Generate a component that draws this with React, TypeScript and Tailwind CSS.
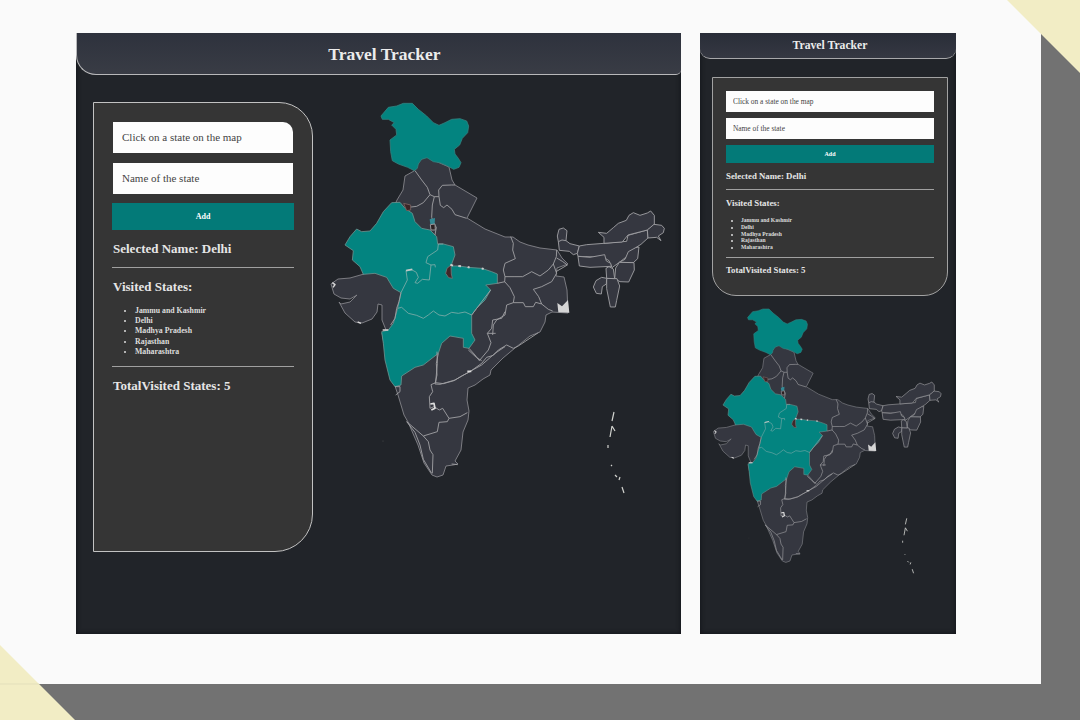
import React from "react";

const visited = ["Jammu and Kashmir", "Delhi", "Madhya Pradesh", "Rajasthan", "Maharashtra"];

function IndiaMap({ className }: { className: string }) {
  return (
    <svg
      viewBox="326 96 344 404"
      preserveAspectRatio="none"
      className={className}
      fill="none"
      stroke="#a2a2a5"
      strokeWidth="0.9"
      strokeLinejoin="round"
      role="img"
    >
      {/* mainland */}
      <path
        fill="#353740"
        stroke="#84858a"
        d="M414 171L405 176 403 190 397 200 364 274 350 278 338 279 331 284 334 294 341 298 350 299 357 295 350 302 341 304 339 302 345 313 355 322 362 323 372 319 377 312 378 304 382 305 382 320 386 330 382 333 388 365 395 386 398 395 404 415 408 422 418 445 424 463 432 475 437 477 443 475 446 466 453 465 458 464 455 461 461 450 463 432 468 420 469 411 467 400 468 388 475 385 483 379 490 375 491 370 503 358 515 348 530 336 540 332 545 322 546 315 552 312 568 313 567 290 564 277 556 276 557 268 568 264 562 258 557 250 540 248 528 245 520 242 513 237 505 237 485 229 467 218 477 198 455 185 452 180 449 167 433 160 427 156 420 160Z"
      />
      {/* north east, in a frame offset to (490, 200) at three units per point */}
      <g transform="translate(490 200) scale(.33333)" strokeWidth="2.7" fill="#353740">
        <path d="M205 125L202 108 207 88 220 84 231 92 228 122 240 131 268 138 262 160 250 164 238 154 208 151Z" />
        <path d="M205 125L216 120 228 122" fill="none" />
        <path d="M268 138L290 134 342 130 410 124 414 106 472 90 474 114 453 133 437 143 410 170 388 187 366 203 357 182 340 172 264 169 262 160Z" />
        <path d="M342 130L342 112 325 97 350 100 370 83 385 70 409 61 417 46 430 38 450 46 472 39 482 33 493 46 493 75 472 90 414 105 397 126Z" />
        <path d="M472 90L492 73 515 76 523 85 520 98 505 108 513 122 500 112 474 114Z" />
        <path d="M264 169L300 172 344 164 349 183 362 190 364 199 300 202 268 198Z" />
        <path d="M437 143L447 141 443 176 430 188 388 187 405 178 415 155Z" />
        <path d="M388 187L432 188 433 210 416 246 390 245 374 236 377 204Z" />
        <path d="M350 235L381 236 389 258 380 301 376 321 361 321 350 266Z" />
        <path d="M348 205L357 200 370 207 374 236 350 235Z" />
        <path d="M350 235L335 232 318 242 310 261 319 280 334 282 337 260 349 252Z" />
      </g>
      {/* visited regions */}
      <g fill="#038480" strokeWidth="2.4" stroke="#6f9491">
        <path
          transform="translate(325 90) scale(.33333)"
          stroke="#35827f"
          d="M168 78L190 52 215 48 235 40 262 40 280 58 305 78 325 98 342 106 360 98 380 88 405 86 425 93 431 108 428 128 412 145 404 165 388 178 390 192 400 205 408 218 402 232 386 238 368 228 345 218 325 215 306 203 290 208 280 222 277 235 268 242 248 232 220 222 202 212 197 185 195 150 215 135 213 118 200 105 208 98 190 88 172 88Z"
        />
        <g transform="translate(325 230) scale(.33333)">
          <path d="M60 45L75 20 95-3 110 5 135 3 155-20 175-55 200-82 225-83 240-65 262-50 270-25 290-5 315 0 335 20 338 42 355 42 385 50 390 75 378 108 400 108 430 112 470 115 500 125 517 132 517 160 482 165 497 180 480 210 455 235 440 255 440 310 450 330 432 355 415 352 415 325 375 318 350 340 340 370 295 405 270 412 230 438 228 465 210 470 195 450 180 390 175 340 170 305 190 300 205 280 218 235 228 188 205 175 185 142 150 130 115 133 105 110 82 90 85 62Z" />
          <g fill="none" stroke="#85aeab">
            <path d="M228 188L247 150 243 122 258 118 274 127 280 142 270 158 278 160 292 148 313 150 318 105 303 98 308 80 338 60 340 42 355 42M318 105L330 104 331 112" />
            <path d="M218 235L230 232 250 250 275 256 295 265 310 255 325 243 342 255 360 258 380 247 400 250 420 246 440 255" />
          </g>
          <path d="M378 105L366 115 362 130 371 143 382 145 379 132Z" fill="#40272a" stroke="#777" />
          <path d="M243 122L262 118" fill="none" stroke="#bcc8c5" strokeWidth="5" />
          <path d="M376 104L384 107M400 108L408 109M428 111L434 113M470 115L476 117" stroke="#ccc" strokeWidth="6" />
        </g>
      </g>
      {/* northern borders */}
      <g transform="translate(325 90) scale(.33333)" strokeWidth="2.7">
        <path d="M270 242L290 270 307 292 315 314 295 338 275 349 250 352M315 314L328 320 322 345 320 382 326 400 334 412 330 435M328 320L342 320 341 300 352 286 380 285 390 285M342 320L346 346 356 353 366 345 381 358 390 374 425 385" />
        <path d="M236 340L257 345 257 360 245 362Z" fill="#3a2426" stroke="#76605f" />
        <path d="M314 388L330 384 329 402 316 402Z" fill="#328995" stroke="none" />
        <path d="M316 404L330 402 331 420 318 420Z" fill="#2c2022" />
      </g>
      {/* central borders */}
      <g transform="translate(325 230) scale(.33333)" strokeWidth="2.7">
        <path d="M228 188L222 215 215 235 210 265 197 285M440 255L455 235 497 180M432 355L450 375 463 392 490 360 498 338 487 310 512 310M487 310L500 295 503 270 530 265 540 245M340 370L334 400 336 435 330 462 345 463 390 450 425 430 470 405 510 370 540 350M517 160L540 155" />
        <path d="M22 158L30 164 24 172M98 276L108 280M173 300L190 300" stroke="#d6d6d6" strokeWidth="4.5" />
      </g>
      {/* southern borders */}
      <g transform="translate(380 330) scale(.33333)" strokeWidth="2.7">
        <path d="M171 65L172 100 167 158 190 161 222 152 245 138 270 125 305 100 320 82 340 76 355 60 380 45 400 55 415 48 475 8M167 158L153 164 158 185 148 200 150 235 162 230 178 240 188 235 207 265 240 260 262 248M207 265L202 275 177 277 172 305 130 318 80 275M130 318L145 335 150 360 159 374 157 430M80 275L105 307 120 345 130 388 155 430M45 170L60 170 60 185 47 195M265 60L290 83 305 92M215 402L233 404" />
        <path d="M151 222L162 220 165 235 154 240M262 124L274 124" stroke="#ddd" strokeWidth="5" />
      </g>
      {/* eastern borders */}
      <g transform="translate(490 200) scale(.33333)" strokeWidth="2.7">
        <path d="M62 110L70 130 68 150 76 176 45 190 40 210 45 230 75 230 98 230 125 215 150 228 175 210 190 192 199 170 200 150M45 230L44 245 60 263 73 290 70 308 100 308 106 320 130 320 137 307 155 312 175 328 188 333M155 312L146 290 130 268 155 260 185 245 200 220 190 192M70 308L50 315 45 345 20 360 10 375 8 405M200 174L217 184 232 195 198 215" />
        <path d="M202 309L216 319 234 300 238 338 205 337Z" fill="#d5d5d5" stroke="none" />
      </g>
      {/* islands */}
      <path stroke="#d2d3cf" strokeWidth="1.2" d="M614 412L612 421M612 426L610 437M612 426L615 431M608 445L608 448M611 465L612 466M615 475L617 477M620 477L619 480M622 487L624 493" />
      <circle cx="383" cy="441" r=".5" fill="#555" stroke="none" />
    </svg>
  );
}

function Details({ small }: { small?: boolean }) {
  const heading = small
    ? "h-3 whitespace-nowrap text-[8.8px] leading-3 font-bold text-[#e6e6e6]"
    : "h-4 whitespace-nowrap text-[13px] leading-4 font-bold text-[#e6e6e6]";
  const field = small
    ? "block h-[21px] w-full bg-[#fdfdfd] px-[7px] text-[7.4px] text-[#333] placeholder:text-[#444]"
    : "block h-[31px] w-full bg-[#fdfdfd] px-[9px] pb-[2px] text-[11px] text-[#333] placeholder:text-[#444]";
  return (
    <>
      <input placeholder="Click on a state on the map" className={small ? field : field + " rounded-tr-[10px]"} />
      <input placeholder="Name of the state" className={(small ? "mt-[6px] " : "mt-[10px] ") + field} />
      <button
        className={
          small
            ? "mt-[6px] block h-[18px] w-full bg-[#037a78] text-[6px] font-bold text-white"
            : "mt-[9px] -ml-px block h-[27px] w-[182px] bg-[#037a78] text-[8px] font-bold text-white"
        }
      >
        Add
      </button>
      <h2 className={(small ? "mt-[7px] " : "mt-[11px] ") + heading}>Selected Name: Delhi</h2>
      <hr className={small ? "mt-[7px] border-[#a0a0a0]" : "mt-[10px] -mx-px border-[#a0a0a0]"} />
      <h2 className={(small ? "mt-[7px] " : "mt-[11px] ") + heading}>Visited States:</h2>
      <ul
        className={
          small
            ? "mt-[8px] h-[34px] list-disc pl-[15px] text-[5.6px] leading-[6.8px] font-bold text-[#dddddd]"
            : "mt-[11px] h-[51px] list-disc pl-[22px] text-[7.8px] leading-[10.2px] font-bold text-[#dddddd]"
        }
      >
        {visited.map((s) => (
          <li key={s}>{s}</li>
        ))}
      </ul>
      <hr className={small ? "mt-[6px] border-[#a0a0a0]" : "mt-[9px] -mx-px border-[#a0a0a0]"} />
      <h2 className={(small ? "mt-[6px] " : "mt-[11px] ") + heading}>TotalVisited States: 5</h2>
    </>
  );
}

export default function App() {
  return (
    <div className="relative h-[720px] w-[1080px] overflow-hidden bg-[#727272] font-['Liberation_Serif',serif]">
      <div className="flex h-[684px] w-[1041px] items-start bg-[#fafafa] pt-[33px] pl-[76px]">
        <section className="flex h-[601px] w-[605px] flex-col bg-[#212429] shadow-[inset_0_0_5px_#101116]">
          <header className="flex h-[42px] shrink-0 items-center justify-center rounded-bl-[20px] rounded-br-[5px] border-b border-l border-[#b8b8ba] bg-linear-to-b from-[#2e323d] to-[#393c45] pt-[2px] pl-[11px] text-[17.5px] font-bold text-[#ececec]">
            <h1>Travel Tracker</h1>
          </header>
          <main className="flex grow pt-[27px] pl-[17px]">
            <div className="h-[450px] w-[220px] shrink-0 rounded-tr-[34px] rounded-br-[38px] border border-[#c2c2c2] bg-[#353535] px-[19px] pt-[19px]">
              <Details />
            </div>
            <IndiaMap className="-mt-[6px] ml-[13px] block h-[404px] w-[344px] shrink-0" />
          </main>
        </section>
        <section className="ml-[19px] flex h-[601px] w-[256px] flex-col bg-[#212429] shadow-[inset_0_0_5px_#101116]">
          <header className="flex h-[26px] shrink-0 items-center justify-center rounded-b-[10px] border-b border-[#a8a8aa] bg-linear-to-b from-[#292d38] to-[#353842] pl-[4px] text-[11.7px] font-bold text-[#ececec]">
            <h1>Travel Tracker</h1>
          </header>
          <main className="flex grow flex-col pt-[18px] pl-[12px]">
            <div className="h-[219px] w-[236px] shrink-0 rounded-b-[24px] border border-[#a2a2a2] bg-[#353535] px-[13px] pt-[13px]">
              <Details small />
            </div>
            <IndiaMap className="mt-[8px] -ml-[2px] block h-[274px] w-[235px] shrink-0" />
          </main>
        </section>
      </div>
      <svg className="absolute top-0 right-0 h-[73px] w-[73px]" viewBox="0 0 73 73">
        <path d="M0 0H73V73Z" fill="#f2edc5" />
      </svg>
      <svg className="absolute bottom-0 left-0 h-[75px] w-[75px]" viewBox="0 0 75 75">
        <path d="M0 0L75 75H0Z" fill="#f2edc5" />
        <path d="M0 39H39" stroke="#dedab7" strokeWidth=".7" />
      </svg>
    </div>
  );
}
